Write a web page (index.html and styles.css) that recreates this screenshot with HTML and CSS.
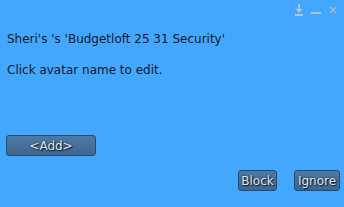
FILE: index.html
```html
<!DOCTYPE html>
<html>
<head>
<meta charset="utf-8">
<link rel="stylesheet" href="styles.css">
</head>
<body>
<div class="panel">
  <div class="titlebar">
    <svg class="icon" width="8" height="12" viewBox="0 0 8 12">
      <rect x="3" y="0" width="2" height="5" fill="#b4c3d2"/>
      <path d="M0.5 5 L7.5 5 L4 9 Z" fill="#b4c3d2"/>
      <rect x="0" y="10" width="8" height="2" fill="#b4c3d2"/>
    </svg>
    <svg class="icon" width="10" height="12" viewBox="0 0 10 12">
      <rect x="0" y="8" width="10" height="2" fill="#b4c3d2"/>
    </svg>
    <svg class="icon" width="8" height="12" viewBox="0 0 8 12">
      <path d="M1 3 L7 9 M7 3 L1 9" stroke="#a6b6c6" stroke-width="1.5"/>
    </svg>
  </div>
  <p class="line first">Sheri's 's 'Budgetloft 25 31 Security'</p>
  <p class="line second">Click avatar name to edit.</p>
  <div class="addrow">
    <button class="btn add">&lt;Add&gt;</button>
  </div>
  <div class="actions">
    <button class="btn block">Block</button>
    <button class="btn ignore">Ignore</button>
  </div>
</div>
</body>
</html>
```
FILE: styles.css
```css
html, body {
  margin: 0;
  padding: 0;
  background: #44a7fe;
}
.panel {
  width: 344px;
  height: 207px;
  font-family: "DejaVu Sans", sans-serif;
  font-size: 12px;
  color: #141a28;
  display: flex;
  flex-direction: column;
}
.titlebar {
  height: 20px;
  display: flex;
  justify-content: flex-end;
  align-items: flex-start;
  gap: 8px;
  padding: 4px 7px 0 0;
  box-sizing: border-box;
}
.icon {
  display: block;
}
.line {
  margin: 0;
  padding-left: 7px;
  line-height: 15px;
}
.first {
  margin-top: 12px;
}
.second {
  margin-top: 16px;
}
.addrow {
  margin-top: 57px;
  padding-left: 6px;
  display: flex;
}
.actions {
  margin-top: 14px;
  display: flex;
  justify-content: flex-end;
  gap: 17px;
  padding-right: 4px;
}
.btn {
  font-family: "DejaVu Sans", sans-serif;
  font-size: 12px;
  color: #e4ebf2;
  text-shadow: 0 0 2px #0c1a2a, 1px 1px 1px #0c1a2a;
  background: linear-gradient(#4d7aa3, #3d6690);
  border: 1px solid #274a6c;
  border-radius: 3px;
  height: 21px;
  padding: 0;
  margin: 0;
  box-sizing: border-box;
}
.add {
  width: 90px;
}
.block {
  width: 39px;
}
.ignore {
  width: 46px;
}
```
